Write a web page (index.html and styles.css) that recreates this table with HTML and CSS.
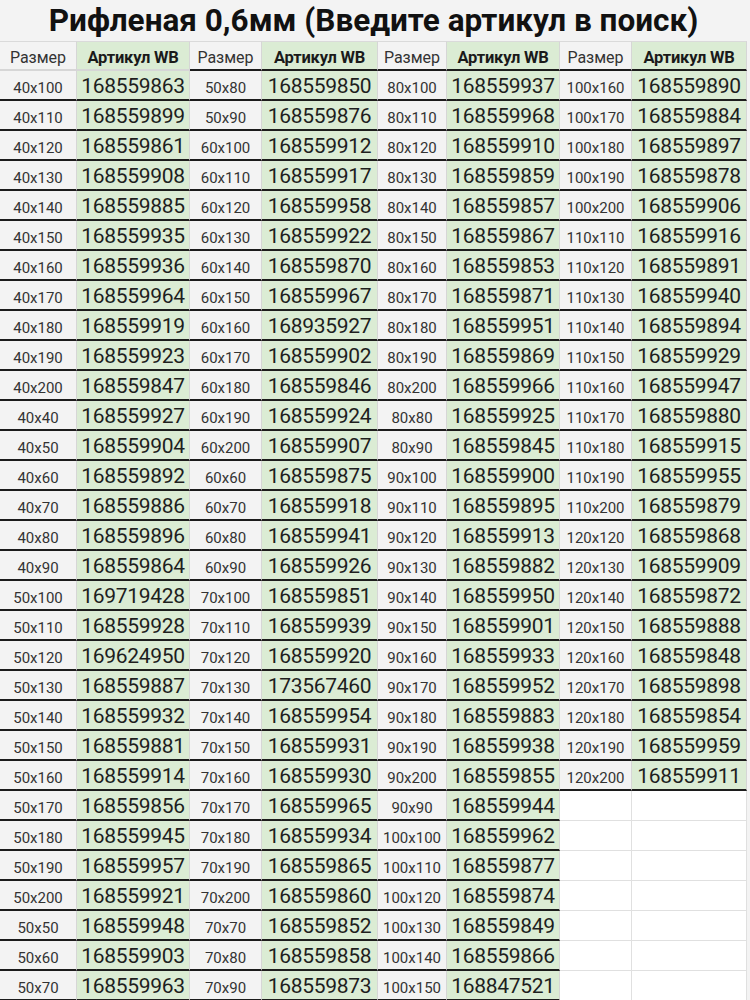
FILE: index.html
```html
<!DOCTYPE html>
<html lang="ru">
<head>
<meta charset="utf-8">
<title>Рифленая 0,6мм</title>
<link rel="stylesheet" href="styles.css">
</head>
<body>
<div class="title">Рифленая 0,6мм (Введите артикул в поиск)</div>
<table class="sheet">
<colgroup><col class="c1"><col class="c2"><col class="c3"><col class="c4"><col class="c5"><col class="c6"><col class="c7"><col class="c8"></colgroup>
<thead>
<tr><th class="s soft">Размер</th><th class="a soft">Артикул WB</th><th class="s">Размер</th><th class="a">Артикул WB</th><th class="s">Размер</th><th class="a">Артикул WB</th><th class="s">Размер</th><th class="a">Артикул WB</th></tr>
</thead>
<tbody>
<tr><td class="s">40x100</td><td class="a">168559863</td><td class="s">50x80</td><td class="a">168559850</td><td class="s">80x100</td><td class="a">168559937</td><td class="s">100x160</td><td class="a">168559890</td></tr>
<tr><td class="s">40x110</td><td class="a">168559899</td><td class="s">50x90</td><td class="a">168559876</td><td class="s">80x110</td><td class="a">168559968</td><td class="s">100x170</td><td class="a">168559884</td></tr>
<tr><td class="s">40x120</td><td class="a">168559861</td><td class="s">60x100</td><td class="a">168559912</td><td class="s">80x120</td><td class="a">168559910</td><td class="s">100x180</td><td class="a">168559897</td></tr>
<tr><td class="s">40x130</td><td class="a">168559908</td><td class="s">60x110</td><td class="a">168559917</td><td class="s">80x130</td><td class="a">168559859</td><td class="s">100x190</td><td class="a">168559878</td></tr>
<tr><td class="s">40x140</td><td class="a">168559885</td><td class="s">60x120</td><td class="a">168559958</td><td class="s">80x140</td><td class="a">168559857</td><td class="s">100x200</td><td class="a">168559906</td></tr>
<tr><td class="s">40x150</td><td class="a">168559935</td><td class="s">60x130</td><td class="a">168559922</td><td class="s">80x150</td><td class="a">168559867</td><td class="s">110x110</td><td class="a">168559916</td></tr>
<tr><td class="s">40x160</td><td class="a">168559936</td><td class="s">60x140</td><td class="a">168559870</td><td class="s">80x160</td><td class="a">168559853</td><td class="s">110x120</td><td class="a">168559891</td></tr>
<tr><td class="s">40x170</td><td class="a">168559964</td><td class="s">60x150</td><td class="a">168559967</td><td class="s">80x170</td><td class="a">168559871</td><td class="s">110x130</td><td class="a">168559940</td></tr>
<tr><td class="s">40x180</td><td class="a">168559919</td><td class="s">60x160</td><td class="a">168935927</td><td class="s">80x180</td><td class="a">168559951</td><td class="s">110x140</td><td class="a">168559894</td></tr>
<tr><td class="s">40x190</td><td class="a">168559923</td><td class="s">60x170</td><td class="a">168559902</td><td class="s">80x190</td><td class="a">168559869</td><td class="s">110x150</td><td class="a">168559929</td></tr>
<tr><td class="s">40x200</td><td class="a">168559847</td><td class="s">60x180</td><td class="a">168559846</td><td class="s">80x200</td><td class="a">168559966</td><td class="s">110x160</td><td class="a">168559947</td></tr>
<tr><td class="s">40x40</td><td class="a">168559927</td><td class="s">60x190</td><td class="a">168559924</td><td class="s">80x80</td><td class="a">168559925</td><td class="s">110x170</td><td class="a">168559880</td></tr>
<tr><td class="s">40x50</td><td class="a">168559904</td><td class="s">60x200</td><td class="a">168559907</td><td class="s">80x90</td><td class="a">168559845</td><td class="s">110x180</td><td class="a">168559915</td></tr>
<tr><td class="s">40x60</td><td class="a">168559892</td><td class="s">60x60</td><td class="a">168559875</td><td class="s">90x100</td><td class="a">168559900</td><td class="s">110x190</td><td class="a">168559955</td></tr>
<tr><td class="s">40x70</td><td class="a">168559886</td><td class="s">60x70</td><td class="a">168559918</td><td class="s">90x110</td><td class="a">168559895</td><td class="s">110x200</td><td class="a">168559879</td></tr>
<tr><td class="s">40x80</td><td class="a">168559896</td><td class="s">60x80</td><td class="a">168559941</td><td class="s">90x120</td><td class="a">168559913</td><td class="s">120x120</td><td class="a">168559868</td></tr>
<tr><td class="s">40x90</td><td class="a">168559864</td><td class="s">60x90</td><td class="a">168559926</td><td class="s">90x130</td><td class="a">168559882</td><td class="s">120x130</td><td class="a">168559909</td></tr>
<tr><td class="s">50x100</td><td class="a">169719428</td><td class="s">70x100</td><td class="a">168559851</td><td class="s">90x140</td><td class="a">168559950</td><td class="s">120x140</td><td class="a">168559872</td></tr>
<tr><td class="s">50x110</td><td class="a">168559928</td><td class="s">70x110</td><td class="a">168559939</td><td class="s">90x150</td><td class="a">168559901</td><td class="s">120x150</td><td class="a">168559888</td></tr>
<tr><td class="s">50x120</td><td class="a">169624950</td><td class="s">70x120</td><td class="a">168559920</td><td class="s">90x160</td><td class="a">168559933</td><td class="s">120x160</td><td class="a">168559848</td></tr>
<tr><td class="s">50x130</td><td class="a">168559887</td><td class="s">70x130</td><td class="a">173567460</td><td class="s">90x170</td><td class="a">168559952</td><td class="s">120x170</td><td class="a">168559898</td></tr>
<tr><td class="s">50x140</td><td class="a">168559932</td><td class="s">70x140</td><td class="a">168559954</td><td class="s">90x180</td><td class="a">168559883</td><td class="s">120x180</td><td class="a">168559854</td></tr>
<tr><td class="s">50x150</td><td class="a">168559881</td><td class="s">70x150</td><td class="a">168559931</td><td class="s">90x190</td><td class="a">168559938</td><td class="s">120x190</td><td class="a">168559959</td></tr>
<tr><td class="s">50x160</td><td class="a">168559914</td><td class="s">70x160</td><td class="a">168559930</td><td class="s">90x200</td><td class="a">168559855</td><td class="s">120x200</td><td class="a">168559911</td></tr>
<tr><td class="s">50x170</td><td class="a">168559856</td><td class="s">70x170</td><td class="a">168559965</td><td class="s">90x90</td><td class="a">168559944</td><td class="e"></td><td class="e"></td></tr>
<tr><td class="s">50x180</td><td class="a">168559945</td><td class="s">70x180</td><td class="a">168559934</td><td class="s">100x100</td><td class="a">168559962</td><td class="e"></td><td class="e"></td></tr>
<tr><td class="s">50x190</td><td class="a">168559957</td><td class="s">70x190</td><td class="a">168559865</td><td class="s">100x110</td><td class="a">168559877</td><td class="e"></td><td class="e"></td></tr>
<tr><td class="s">50x200</td><td class="a">168559921</td><td class="s">70x200</td><td class="a">168559860</td><td class="s">100x120</td><td class="a">168559874</td><td class="e"></td><td class="e"></td></tr>
<tr><td class="s">50x50</td><td class="a">168559948</td><td class="s">70x70</td><td class="a">168559852</td><td class="s">100x130</td><td class="a">168559849</td><td class="e"></td><td class="e"></td></tr>
<tr><td class="s">50x60</td><td class="a">168559903</td><td class="s">70x80</td><td class="a">168559858</td><td class="s">100x140</td><td class="a">168559866</td><td class="e"></td><td class="e"></td></tr>
<tr><td class="s">50x70</td><td class="a">168559963</td><td class="s">70x90</td><td class="a">168559873</td><td class="s">100x150</td><td class="a">168847521</td><td class="e"></td><td class="e"></td></tr>
</tbody>
</table>
</body>
</html>
```

FILE: styles.css
```css
body {
  margin: 0;
  background: #f3f3f3;
  font-family: Roboto, "Liberation Sans", sans-serif;
  color: #222;
}

.title {
  width: 747px;
  height: 41px;
  line-height: 42px;
  font-size: 31.5px;
  font-weight: 700;
  text-align: center;
  color: #111;
  white-space: nowrap;
}

.sheet {
  width: 747px;
  table-layout: fixed;
  border-collapse: separate;
  border-spacing: 0;
}

.c1 { width: 77px; }
.c2 { width: 113px; }
.c3 { width: 72px; }
.c4 { width: 116px; }
.c5 { width: 69px; }
.c6 { width: 113px; }
.c7 { width: 72px; }
.c8 { width: 115px; }

.sheet th,
.sheet td {
  padding: 0;
  text-align: center;
  vertical-align: bottom;
  white-space: nowrap;
  overflow: hidden;
  border-right: 1px solid #d6d6d6;
}

.sheet thead tr { height: 30px; }
.sheet tbody tr { height: 30px; }

.sheet th {
  border-top: 1px solid #dadada;
  border-bottom: 2px solid #1c1c1c;
  font-size: 16px;
  line-height: 20px;
  padding-bottom: 1px;
  color: #222;
}

.sheet th.s { font-weight: 400; color: #333; }
.sheet th.a { font-weight: 700; font-size: 16.5px; color: #1a1a1a; letter-spacing: -0.2px; }
.sheet th.soft { border-bottom-color: #d6d6d6; }

.sheet td { border-bottom: 2px solid #1c1c1c; }

.s { background: #f3f3f3; }
.a { background: #dbecd4; }

.sheet td.s {
  font-size: 15px;
  line-height: 16px;
  padding-bottom: 3px;
  color: #333;
}

.sheet td.a {
  font-size: 21px;
  line-height: 24px;
  letter-spacing: -0.3px;
  padding-bottom: 1px;
  color: #1e1e1e;
}

.sheet td.e {
  background: #fff;
  border-bottom: 1px solid #e0e0e0;
  border-right-color: #e0e0e0;
}
```
